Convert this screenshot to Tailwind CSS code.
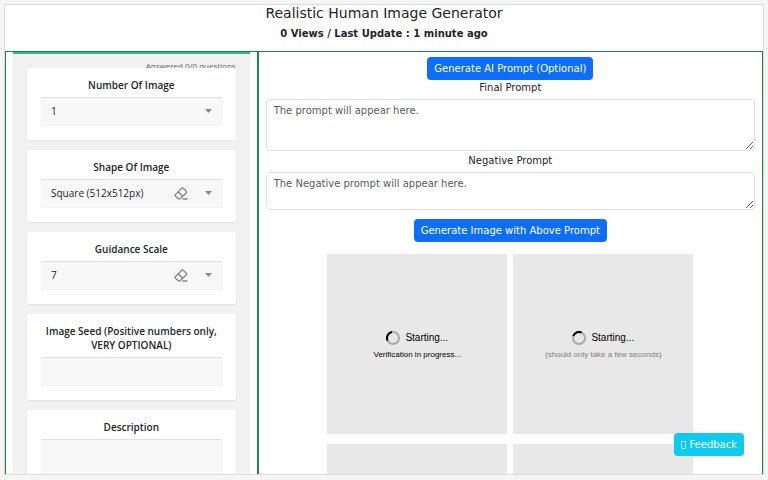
<!DOCTYPE html>
<html lang="en">

<head>
  <meta charset="UTF-8" />
  <meta name="viewport" content="width=device-width, initial-scale=1.0" />
  <title>Realistic Human Image Generator</title>
  <script src="https://cdn.jsdelivr.net/npm/@tailwindcss/browser@4"></script>
</head>

<body class="h-screen overflow-hidden bg-[#f5f5f5] p-1 pb-[5px] font-['DejaVu_Sans',sans-serif] text-[10px] leading-[15px] text-[#212529]">
  <main class="flex h-full flex-col overflow-hidden border border-[#dcdcdc] bg-white">
    <!-- Header -->
    <header class="h-[46px] shrink-0 text-center">
      <h1 class="text-[14px] leading-[17px]">Realistic Human Image Generator</h1>
      <p class="mt-1 font-bold">0 Views / Last Update : 1 minute ago</p>
    </header>

    <div class="flex min-h-0 flex-1">
      <!-- Options -->
      <section class="w-1/3 overflow-hidden border border-b-0 border-[#198754] px-[7px]">
        <form class="border-t-2 border-[#3cb489] bg-[#f1f1f1] px-[14px] font-['Open_Sans',sans-serif]">
          <p class="h-[14px] pt-[5px] text-right text-[8px] leading-[14px] text-[#666]">Answered 0/0 questions</p>
          <div class="relative flex flex-col gap-[10px]">
            <div class="rounded-xs bg-white px-[14px] pt-[10px] pb-[14px] shadow-xs">
              <label for="count" class="block text-center leading-[14px] font-semibold">Number Of Image</label>
              <div class="relative mt-[5px]">
                <select id="count" class="h-[29px] w-full appearance-none border border-[#f3f3f3] border-t-[#e0e0e0] bg-[#f8f8f8] px-[9px]">
                  <option>1</option>
                </select>
                <svg class="pointer-events-none absolute top-3 right-[10px] h-1 w-[7px]" viewBox="0 0 7 4" fill="#888"><path d="M0 0h7L3.500 4z" /></svg>
              </div>
            </div>

            <div class="rounded-xs bg-white px-[14px] pt-[10px] pb-[14px] shadow-xs">
              <label for="shape" class="block text-center leading-[14px] font-semibold">Shape Of Image</label>
              <div class="relative mt-[5px]">
                <select id="shape" class="h-[29px] w-full appearance-none border border-[#f3f3f3] border-t-[#e0e0e0] bg-[#f8f8f8] px-[9px]">
                  <option>Square (512x512px)</option>
                </select>
                <button type="button" aria-label="Clear shape" class="absolute top-2 right-[34px]">
                  <svg class="h-[13px] w-[14px]" viewBox="0 0 14 13" fill="none" stroke="#858585" stroke-width="1.3" stroke-linejoin="round"><path d="M4.200 11.800L1.100 8.700Q.700 8.300 1.100 7.900L8 1Q8.500.600 9 1L12.500 4.500Q12.900 5 12.500 5.500L6.200 11.800zM4.300 4.800L9.200 9.700M8.500 12h5" /></svg>
                </button>
                <svg class="pointer-events-none absolute top-3 right-[10px] h-1 w-[7px]" viewBox="0 0 7 4" fill="#888"><path d="M0 0h7L3.500 4z" /></svg>
              </div>
            </div>

            <div class="rounded-xs bg-white px-[14px] pt-[10px] pb-[14px] shadow-xs">
              <label for="guidance" class="block text-center leading-[14px] font-semibold">Guidance Scale</label>
              <div class="relative mt-[5px]">
                <select id="guidance" class="h-[29px] w-full appearance-none border border-[#f3f3f3] border-t-[#e0e0e0] bg-[#f8f8f8] px-[9px]">
                  <option>7</option>
                </select>
                <button type="button" aria-label="Clear guidance scale" class="absolute top-2 right-[34px]">
                  <svg class="h-[13px] w-[14px]" viewBox="0 0 14 13" fill="none" stroke="#858585" stroke-width="1.3" stroke-linejoin="round"><path d="M4.200 11.800L1.100 8.700Q.700 8.300 1.100 7.900L8 1Q8.500.600 9 1L12.500 4.500Q12.900 5 12.500 5.500L6.200 11.800zM4.300 4.800L9.200 9.700M8.500 12h5" /></svg>
                </button>
                <svg class="pointer-events-none absolute top-3 right-[10px] h-1 w-[7px]" viewBox="0 0 7 4" fill="#888"><path d="M0 0h7L3.500 4z" /></svg>
              </div>
            </div>

            <div class="rounded-xs bg-white px-[14px] pt-[10px] pb-[14px] shadow-xs">
              <label for="seed" class="block text-center leading-[14px] font-semibold">Image Seed (Positive numbers only, VERY OPTIONAL)</label>
              <input id="seed" type="text" class="mt-[5px] block h-[29px] w-full border border-[#f3f3f3] border-t-[#e0e0e0] bg-[#f8f8f8] px-[9px]" />
            </div>

            <div class="rounded-xs bg-white px-[14px] pt-[10px] pb-[14px] shadow-xs">
              <label for="description" class="block text-center leading-[14px] font-semibold">Description</label>
              <textarea id="description" class="mt-[5px] block h-20 w-full border border-[#f3f3f3] border-t-[#e0e0e0] bg-[#f8f8f8] px-[9px]"></textarea>
            </div>
          </div>
        </form>
      </section>

      <!-- Prompts and results -->
      <section class="flex flex-1 flex-col items-center overflow-hidden border border-b-0 border-[#198754] px-[7px] pt-[5px]">
        <button type="button" class="h-[23px] shrink-0 rounded-sm bg-[#0d6efd] px-[7px] text-white">Generate AI Prompt (Optional)</button>
        <label for="prompt">Final Prompt</label>
        <textarea id="prompt" class="mt-1 h-[52px] w-full shrink-0 rounded-sm border border-[#dee2e6] px-[7px] py-[3px] placeholder:text-[#595c5f]" placeholder="The prompt will appear here."></textarea>
        <label for="negative" class="mt-[2px]">Negative Prompt</label>
        <textarea id="negative" class="mt-1 h-[38px] w-full shrink-0 rounded-sm border border-[#dee2e6] px-[7px] py-[3px] placeholder:text-[#595c5f]" placeholder="The Negative prompt will appear here."></textarea>
        <button type="button" class="mt-[9px] h-[23px] shrink-0 rounded-sm bg-[#0d6efd] px-[7px] text-white">Generate Image with Above Prompt</button>

        <div class="mt-3 grid grid-cols-[180px_180px] gap-x-[6px] gap-y-[10px] font-['Liberation_Sans',sans-serif] text-black">
          <div class="flex h-[180px] flex-col items-center justify-center bg-[#e8e8e8] pt-[3px]">
            <p class="flex items-center gap-[5px] leading-[16px]">
              <svg class="size-[14px]" viewBox="0 0 14 14" fill="none" stroke-width="2"><circle cx="7" cy="7" r="6" stroke="#aaa" /><path d="M1.600 9.600A6 6 0 0 1 6 1.100" stroke="#000" /></svg>
              Starting...
            </p>
            <p class="mt-[2px] text-[8px] leading-[14px]">Verification in progress...</p>
          </div>
          <div class="flex h-[180px] flex-col items-center justify-center bg-[#e8e8e8] pt-[3px]">
            <p class="flex items-center gap-[5px] leading-[16px]">
              <svg class="size-[14px]" viewBox="0 0 14 14" fill="none" stroke-width="2"><circle cx="7" cy="7" r="6" stroke="#aaa" /><path d="M1.300 5A6 6 0 0 1 9.500 1.500" stroke="#000" /></svg>
              Starting...
            </p>
            <p class="mt-[2px] text-[8px] leading-[14px] text-[#808080]">(should only take a few seconds)</p>
          </div>
          <div class="h-[180px] bg-[#e8e8e8]"></div>
          <div class="h-[180px] bg-[#e8e8e8]"></div>
        </div>
      </section>
    </div>
  </main>

  <button type="button" class="fixed right-6 bottom-6 flex h-[23px] items-center gap-[3px] rounded-sm bg-[#0dcaf0] px-[7px] text-white">
    <span class="h-2 w-[5px] border border-white/70"></span>
    Feedback
  </button>
</body>

</html>
